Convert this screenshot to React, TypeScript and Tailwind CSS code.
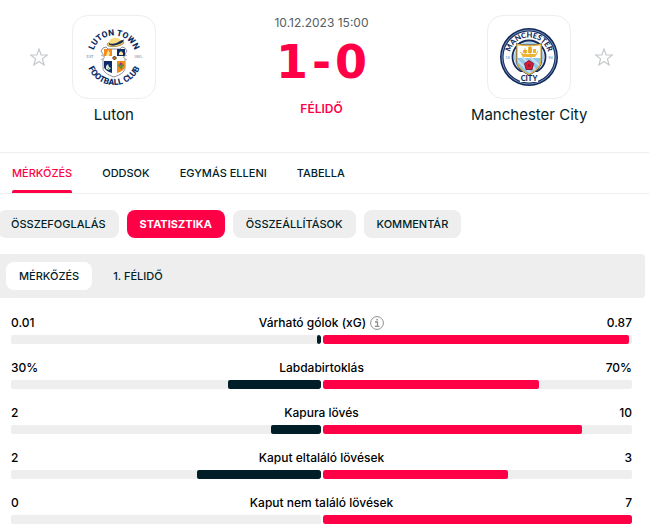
import React, { useState } from 'react';

interface Stat {
  label: string;
  home: number;
  away: number;
  unit?: string;
  info?: boolean;
}

interface TeamProps {
  name: string;
  logo: React.ReactNode;
  starSide: 'left' | 'right';
}

const MAIN_TABS = ['MÉRKŐZÉS', 'ODDSOK', 'EGYMÁS ELLENI', 'TABELLA'];
const SUB_TABS = ['ÖSSZEFOGLALÁS', 'STATISZTIKA', 'ÖSSZEÁLLÍTÁSOK', 'KOMMENTÁR'];
const PERIODS = ['MÉRKŐZÉS', '1. FÉLIDŐ'];

const STATS: Stat[] = [
  { label: 'Várható gólok (xG)', home: 0.01, away: 0.87, info: true },
  { label: 'Labdabirtoklás', home: 30, away: 70, unit: '%' },
  { label: 'Kapura lövés', home: 2, away: 10 },
  { label: 'Kaput eltaláló lövések', home: 2, away: 3 },
  { label: 'Kaput nem találó lövések', home: 0, away: 7 },
];

const LutonLogo = () => (
  <svg viewBox="1 1 82 82" className="w-full h-full" aria-hidden="true">
    <defs>
      <path id="luton-top" d="M20.500 42a21.500 21.500 0 0 1 43 0" />
      <path id="luton-bottom" d="M14 42a28 28 0 0 0 56 0" />
    </defs>
    <g fill="#0b2a63" fontFamily="Roboto, sans-serif" fontWeight="800" textAnchor="middle">
      <text fontSize="8.500"><textPath href="#luton-top" startOffset="50%">LUTON TOWN</textPath></text>
      <text fontSize="8.500"><textPath href="#luton-bottom" startOffset="50%">FOOTBALL CLUB</textPath></text>
    </g>
    <g fill="#5f7896" fontFamily="'Liberation Serif', serif" fontSize="4" textAnchor="middle">
      <text x="18" y="43">EST</text>
      <text x="66" y="43">1885</text>
    </g>
    <path d="M31 33l3-1 2 2h12l2-2 3 1 2 3-2 3v14c0 4-5 7-11 9-6-2-11-5-11-9V39l-2-3z" fill="#fff" stroke="#8b8f98" strokeWidth="1" />
    <path d="M32 34h8v7h-8z" fill="#f28a1c" />
    <path d="M45 34h8v7h-8z" fill="#0d2b66" />
    <path d="M32 46h8v12c-4-1-8-4-8-6z" fill="#0d2b66" />
    <path d="M45 46h8v6c0 2-4 5-8 6z" fill="#f28a1c" />
    <path d="M29 40l4 2-4 3M55 40l-4 2 4 3" fill="#fff" stroke="#9a9a9a" strokeWidth="0.8" />
    <path d="M36 35l2 3-1 3h-3l1-3zM49 36l2 2v2h-4v-2z" fill="#fbe39a" />
    <path d="M34 51l2-2 1 3 2 1-2 2-3-1z" fill="#dce8dc" />
    <path d="M36 53l2 2" stroke="#4c9a3c" />
    <circle cx="49" cy="49" r="1.500" fill="#8d3b87" />
    <path d="M46 50l2 1v2M52 50l-2 1-1 3" fill="none" stroke="#3f9240" strokeWidth="1.400" />
    <path d="M42.500 41l2 2-2 2-2-2z" fill="#c86f16" stroke="#222" strokeWidth="0.8" />
    <ellipse cx="43.500" cy="28.500" rx="8.500" ry="3" fill="#f6cd68" stroke="#8d6b2d" strokeWidth="0.6" transform="rotate(-8 43.5 28.5)" />
    <path d="M37 27c1-5 10-6 12-1l-1 3c-4 2-8 2-11 0z" fill="#fbdc83" />
    <path d="M37 28c4 2 8 0 11-2l4-1.500-1 2.500c-4 3-11 5-14 2.500z" fill="#172c55" />
  </svg>
);

const CityLogo = () => (
  <svg viewBox="1 1 82 82" className="w-full h-full" aria-hidden="true">
    <defs>
      <path id="city-top" d="M22.500 42a19.500 19.500 0 0 1 39 0" />
      <clipPath id="city-shield">
        <path d="M30 29.500q12 2 24 0v16c0 7-6 11-12 14-6-3-12-7-12-14z" />
      </clipPath>
    </defs>
    <circle cx="42" cy="42" r="29" fill="#14295a" />
    <circle cx="42" cy="42" r="27" fill="none" stroke="#86aed6" strokeWidth="0.8" />
    <circle cx="42" cy="42" r="25.500" fill="#fff" />
    <circle cx="42" cy="42" r="16.500" fill="#fff" stroke="#14295a" strokeWidth="1.800" />
    <circle cx="42" cy="42" r="15" fill="#a4cbea" />
    <path d="M33 57h18v10H33z" fill="#fff" />
    <g fill="#14295a" fontFamily="Lato, sans-serif" fontWeight="900" textAnchor="middle">
      <text fontSize="7.500"><textPath href="#city-top" startOffset="50%">MANCHESTER</textPath></text>
      <text x="42" y="66" fontSize="7.500">CITY</text>
    </g>
    <g fill="#76aee0" fontFamily="Lato, sans-serif" fontSize="4" fontWeight="700" textAnchor="middle">
      <text x="20.500" y="43.500">18</text>
      <text x="63.500" y="43.500">94</text>
    </g>
    <path d="M30 29.500q12 2 24 0v16c0 7-6 11-12 14-6-3-12-7-12-14z" fill="#fff" stroke="#14295a" strokeWidth="2" />
    <g clipPath="url(#city-shield)">
      <path d="M29 29h26v14H29z" fill="#fff" />
      <path d="M29 43h26v18H29z" fill="#91c5ea" />
      <path d="M29 44l18 17M35 42l18 17M43 42l12 11" stroke="#c6e0f4" strokeWidth="2" />
    </g>
    <path d="M30 29.500q12 2 24 0v16c0 7-6 11-12 14-6-3-12-7-12-14z" fill="none" stroke="#dfb13b" strokeWidth="1.300" />
    <path d="M34 39h16l-2 3H36zM36 35h4v3h-4zM41 32h4v6h-4zM46 34h3v4h-3z" fill="#eeb331" />
    <path d="M33 37l3 2M51 36l-2 3M43 30v9M38 33v6" stroke="#d99a1e" strokeWidth="0.8" />
    <path d="M42 45.500l4.500 3-1.500 6h-6l-1.500-6z" fill="#d31e35" stroke="#84162d" strokeWidth="0.9" />
    <circle cx="42" cy="50.500" r="1.300" fill="#8f1830" />
  </svg>
);

const StarIcon = () => (
  <svg viewBox="0 0 18 18" className="w-[18px] h-[18px]" fill="none" stroke="#c3c8cb" strokeWidth="1.200" aria-hidden="true">
    <path d="M9 1l2.100 5.900 6.200.1-4.900 3.900 1.700 6L9 13.400l-5.100 3.500 1.700-6L.7 7l6.200-.1z" />
  </svg>
);

const InfoIcon = () => (
  <svg viewBox="0 0 14 14" className="w-3.5 h-3.5" fill="none" stroke="#8f8f8f" aria-hidden="true">
    <circle cx="7" cy="7" r="6.400" />
    <path d="M5 6h2.500v4M4.800 10.300h4.600" strokeWidth="1.300" />
    <path d="M6.300 3.800h1.500" strokeWidth="1.500" />
  </svg>
);

const Team: React.FC<TeamProps> = ({ name, logo, starSide }) => {
  const star = (
    <button type="button" aria-label={`${name} hozzáadása a kedvencekhez`}>
      <StarIcon />
    </button>
  );

  return (
    <div className="grid grid-cols-[18px_84px_18px] gap-x-6 justify-center items-center">
      {starSide === 'left' ? star : <span />}
      <div className="w-full h-[84px] border border-[#eeeeee] rounded-2xl bg-white">{logo}</div>
      {starSide === 'right' ? star : <span />}
      <a href="#team" className="col-span-3 mt-1 text-center text-[15px] leading-6">{name}</a>
    </div>
  );
};

const StatRow: React.FC<{ stat: Stat }> = ({ stat }) => {
  // whole percents, the away side takes the remainder
  const homeShare = Math.floor((stat.home / (stat.home + stat.away)) * 100);
  const awayShare = 100 - homeShare;

  return (
    <div>
      <div className="flex items-center justify-between text-[12px] leading-4 font-medium text-black">
        <span className="flex-1">{stat.home}{stat.unit}</span>
        <span className="flex items-center gap-1">
          {stat.label}
          {stat.info && <button type="button" aria-label="Információ"><InfoIcon /></button>}
        </span>
        <span className="flex-1 text-right">{stat.away}{stat.unit}</span>
      </div>
      <div className="grid grid-cols-2 gap-0.5 mt-1 h-[9px]">
        <div className="flex justify-end bg-[#eeeeee] rounded-xs overflow-hidden">
          <div className="bg-[#001e28] rounded-xs" style={{ width: `${homeShare}%` }} />
        </div>
        <div className="bg-[#eeeeee] rounded-xs overflow-hidden">
          <div className="h-full bg-[#ff0046] rounded-xs" style={{ width: `${awayShare}%` }} />
        </div>
      </div>
    </div>
  );
};

const App: React.FC = () => {
  const [mainTab, setMainTab] = useState(MAIN_TABS[0]);
  const [subTab, setSubTab] = useState(SUB_TABS[1]);
  const [period, setPeriod] = useState(PERIODS[0]);

  return (
    <div className="bg-white text-[#001e28] font-[Inter,sans-serif] overflow-x-hidden">
      {/* Teams and score */}
      <header className="grid grid-cols-3 pl-2.5 pr-4 pt-[15px] pb-[25px]">
        <Team name="Luton" logo={<LutonLogo />} starSide="left" />
        <div className="flex flex-col items-center">
          <time className="text-[12px] leading-4 text-[#555e61]">10.12.2023 15:00</time>
          <div className="flex items-center gap-1 mt-2 font-['DejaVu_Sans',sans-serif] font-bold text-[46px] leading-[46px] text-[#ff0046]">
            <span>1</span>
            <span>-</span>
            <span>0</span>
          </div>
          <span className="mt-4 text-[12px] leading-4 font-semibold text-[#ff0046]">FÉLIDŐ</span>
        </div>
        <Team name="Manchester City" logo={<CityLogo />} starSide="right" />
      </header>

      {/* Main tabs */}
      <nav className="flex gap-[30px] px-3 border-y border-[#eeeeee] text-[11px] font-medium">
        {MAIN_TABS.map((tab) => (
          <a
            key={tab}
            href="#match"
            onClick={() => setMainTab(tab)}
            className={`relative flex h-10 items-center ${mainTab === tab ? 'text-[#ff0046]' : ''}`}
          >
            {tab}
            {mainTab === tab && <span className="absolute inset-x-0 bottom-0 h-[3px] rounded-t-xs bg-[#ff0046]" />}
          </a>
        ))}
      </nav>

      <main className="-ml-0.5 mr-1 pt-4">
        <div className="flex gap-2 text-[11px]">
          {SUB_TABS.map((tab) => (
            <button
              key={tab}
              type="button"
              onClick={() => setSubTab(tab)}
              className={`h-7 px-[13px] rounded-lg ${subTab === tab ? 'bg-[#ff0046] text-white font-bold' : 'bg-[#eeeeee] font-medium'}`}
            >
              {tab}
            </button>
          ))}
        </div>

        <div className="flex gap-2 mt-4 p-2 rounded bg-[#eeeeee] text-[11px] font-medium">
          {PERIODS.map((tab) => (
            <button
              key={tab}
              type="button"
              onClick={() => setPeriod(tab)}
              className={`h-7 px-[13px] rounded-lg ${period === tab ? 'bg-white' : ''}`}
            >
              {tab}
            </button>
          ))}
        </div>

        {/* Match statistics */}
        <section className="flex flex-col gap-4 px-[13px] pt-[17px]">
          {STATS.map((stat) => (
            <StatRow key={stat.label} stat={stat} />
          ))}
        </section>
      </main>
    </div>
  );
};

export default App;
